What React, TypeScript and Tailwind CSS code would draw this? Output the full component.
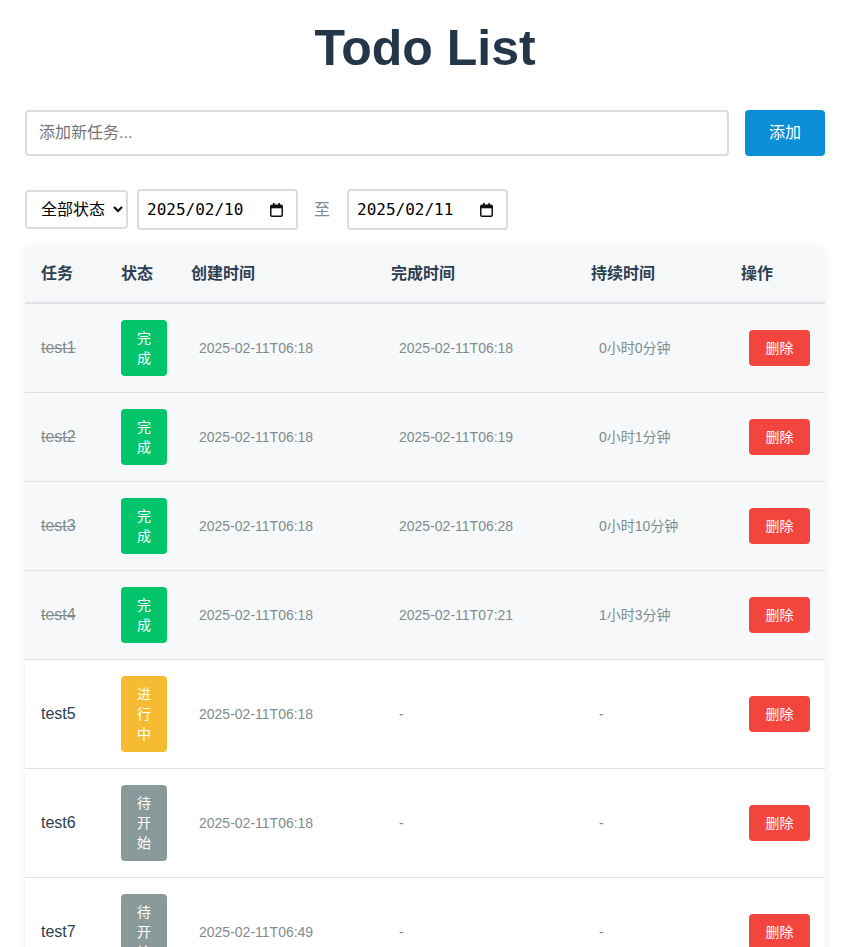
import React from 'react';

type Status = 'done' | 'doing' | 'todo';

interface Todo {
  name: string;
  status: Status;
  created: string;
  finished: string;
  duration: string;
}

const TODOS: Todo[] = [
  { name: 'test1', status: 'done', created: '2025-02-11T06:18', finished: '2025-02-11T06:18', duration: '0小时0分钟' },
  { name: 'test2', status: 'done', created: '2025-02-11T06:18', finished: '2025-02-11T06:19', duration: '0小时1分钟' },
  { name: 'test3', status: 'done', created: '2025-02-11T06:18', finished: '2025-02-11T06:28', duration: '0小时10分钟' },
  { name: 'test4', status: 'done', created: '2025-02-11T06:18', finished: '2025-02-11T07:21', duration: '1小时3分钟' },
  { name: 'test5', status: 'doing', created: '2025-02-11T06:18', finished: '-', duration: '-' },
  { name: 'test6', status: 'todo', created: '2025-02-11T06:18', finished: '-', duration: '-' },
  { name: 'test7', status: 'todo', created: '2025-02-11T06:49', finished: '-', duration: '-' },
];

const BADGE: Record<Status, { label: string; cls: string }> = {
  done: { label: '完成', cls: 'bg-[#02c46b]' },
  doing: { label: '进行中', cls: 'bg-[#f5bb32]' },
  todo: { label: '待开始', cls: 'bg-[#8a9a9b]' },
};

const FONT = "font-['Liberation_Sans','Noto_Sans_CJK_SC',sans-serif]";

// date field drawn by hand so the value reads yyyy/mm/dd like the zh-CN picker
function DateField({ value }: { value: string }) {
  return (
    <div className="w-[161px] h-[41px] pl-[8px] pr-[13px] flex items-center justify-between border-2 border-[#dcdcdc] rounded bg-white">
      <span className="text-[16px] text-black font-['DejaVu_Sans_Mono',monospace]">{value}</span>
      <svg width="13" height="14" viewBox="0 0 13 14" fill="none">
        <rect x="3" y="0" width="1.6" height="3" fill="#111" />
        <rect x="8.4" y="0" width="1.6" height="3" fill="#111" />
        <rect x="0.75" y="2.25" width="11.5" height="11" rx="1.2" stroke="#111" strokeWidth="1.5" />
        <rect x="1" y="2.5" width="11" height="2.8" fill="#111" />
      </svg>
    </div>
  );
}

export default function App() {
  return (
    <div className={`min-h-screen bg-white ${FONT}`}>
      <div className="w-[800px] ml-[25px]">
        {/* title */}
        <h1 className="pt-[20px] pb-[33px] text-center text-[50px] leading-[57px] font-bold text-[#243648]">
          Todo List
        </h1>

        {/* add row */}
        <div className="flex gap-4">
          <input
            className="flex-1 h-[46px] px-3 border-2 border-[#dcdcdc] rounded text-base text-[#2c3e50] placeholder:text-[#757575] outline-none"
            placeholder="添加新任务..."
          />
          <button className="w-[80px] h-[46px] rounded bg-[#0a8fd6] text-white text-base">添加</button>
        </div>

        {/* filters */}
        <div className="flex items-center mt-[33px]">
          <select className="w-[103px] h-[39px] pl-[10px] border-2 border-[#dcdcdc] rounded bg-white text-[16px] text-black">
            <option>全部状态</option>
            <option>完成</option>
            <option>进行中</option>
            <option>待开始</option>
          </select>
          <div className="ml-[9px]">
            <DateField value="2025/02/10" />
          </div>
          <span className="ml-[16px] mr-[17px] text-base text-[#7f8c8d]">至</span>
          <DateField value="2025/02/11" />
        </div>

        {/* table */}
        <div className="mt-[16px] rounded-lg overflow-hidden shadow-[0_2px_10px_rgba(0,0,0,0.08)]">
          <table className="w-full table-fixed border-collapse">
            <colgroup>
              <col className="w-[80px]" />
              <col className="w-[70px]" />
              <col className="w-[200px]" />
              <col className="w-[200px]" />
              <col className="w-[150px]" />
              <col className="w-[100px]" />
            </colgroup>
            <thead>
              <tr className="bg-[#f6f7f9] border-b-2 border-[#dde1e5]">
                {['任务', '状态', '创建时间', '完成时间', '持续时间', '操作'].map((h) => (
                  <th key={h} className="h-[57px] pl-4 text-left text-base font-bold text-[#2c3e50]">
                    {h}
                  </th>
                ))}
              </tr>
            </thead>
            <tbody>
              {TODOS.map((t) => {
                const done = t.status === 'done';
                const badge = BADGE[t.status];
                return (
                  <tr key={t.name} className={`border-b border-[#dde1e5] ${done ? 'bg-[#f7f8fa]' : 'bg-white'}`}>
                    <td className={`pl-4 py-4 align-middle text-base ${done ? 'line-through text-[#7f8c8d]' : 'text-[#2c3e50]'}`}>
                      {t.name}
                    </td>
                    <td className="pl-4 py-4 align-middle">
                      <span className={`inline-block w-[46px] px-4 py-2 rounded text-sm leading-5 text-white ${badge.cls}`}>
                        {badge.label}
                      </span>
                    </td>
                    <td className="pl-6 py-4 align-middle text-sm text-[#7f8c8d]">{t.created}</td>
                    <td className="pl-6 py-4 align-middle text-sm text-[#7f8c8d]">{t.finished}</td>
                    <td className="pl-6 py-4 align-middle text-sm text-[#7f8c8d]">{t.duration}</td>
                    <td className="pl-6 py-4 align-middle">
                      <button className="w-[61px] h-[36px] rounded bg-[#f2453d] text-white text-sm">删除</button>
                    </td>
                  </tr>
                );
              })}
            </tbody>
          </table>
        </div>
      </div>
    </div>
  );
}
